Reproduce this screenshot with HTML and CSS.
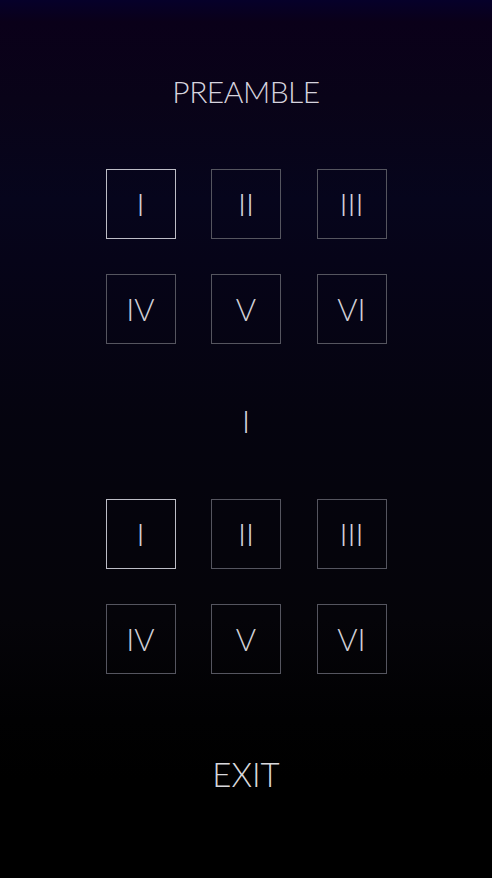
FILE: index.html
```html
<!DOCTYPE html>
<html>
<head>
<meta charset="utf-8">
<link rel="stylesheet" href="styles.css">
</head>
<body>
<div class="screen">
  <div class="title">PREAMBLE</div>
  <div class="grid grid-top">
    <div class="cell active">I</div>
    <div class="cell">II</div>
    <div class="cell">III</div>
    <div class="cell">IV</div>
    <div class="cell">V</div>
    <div class="cell">VI</div>
  </div>
  <div class="current">I</div>
  <div class="grid">
    <div class="cell active">I</div>
    <div class="cell">II</div>
    <div class="cell">III</div>
    <div class="cell">IV</div>
    <div class="cell">V</div>
    <div class="cell">VI</div>
  </div>
  <div class="exit">EXIT</div>
</div>
</body>
</html>
```
FILE: styles.css
```css
html, body {
  margin: 0;
  padding: 0;
  height: 100%;
}
body {
  width: 492px;
  height: 878px;
  overflow: hidden;
  background: linear-gradient(to bottom, #06002a 0px, #0a0019 22px, #090318 100px, #06051c 200px, #060418 260px, #05040f 420px, #050409 620px, #010102 720px, #000000 780px, #000000 878px);
  font-family: Lato, "Open Sans", sans-serif;
  font-weight: 300;
  color: #d4d2dc;
}
.screen {
  display: flex;
  flex-direction: column;
  align-items: center;
  padding-top: 76px;
}
.title {
  font-size: 30px;
  line-height: 31px;
  height: 31px;
  letter-spacing: -0.5px;
  color: #d6d3de;
}
.grid {
  display: grid;
  grid-template-columns: repeat(3, 70px);
  grid-auto-rows: 70px;
  column-gap: 35.5px;
  row-gap: 35px;
}
.grid-top {
  margin-top: 62px;
}
.cell {
  box-sizing: border-box;
  border: 1px solid #55555f;
  display: flex;
  align-items: center;
  justify-content: center;
  font-size: 31px;
  line-height: 31px;
  color: #cfcfd6;
}
.cell.active {
  border: 1.5px solid #bdbdc6;
}
.current {
  margin-top: 62px;
  margin-bottom: 62px;
  font-size: 31px;
  line-height: 31px;
  height: 31px;
}
.exit {
  margin-top: 84px;
  font-size: 33px;
  line-height: 33px;
  letter-spacing: 0px;
  color: #d8d8dc;
}
```
